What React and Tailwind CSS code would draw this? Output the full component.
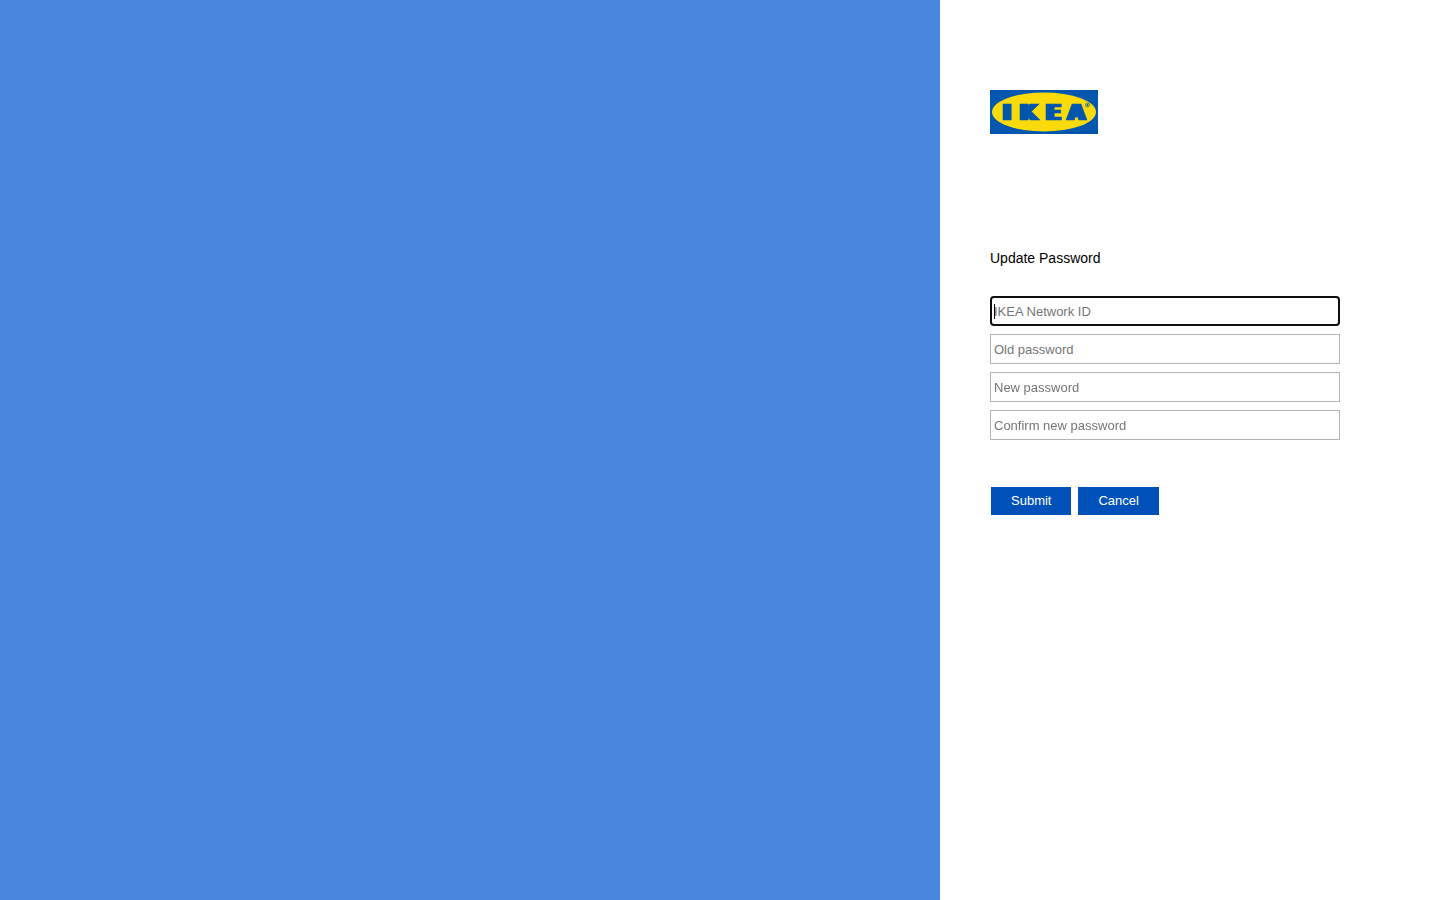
function Logo() {
  return (
    <svg width="108" height="44" viewBox="0 0 108 44" role="img" aria-label="IKEA" className="block">
      <filter id="heavy" filterUnits="userSpaceOnUse" x="0" y="0" width="108" height="44">
        <feMorphology operator="dilate" radius="2 0" />
      </filter>
      <rect width="108" height="44" fill="#0057ad" />
      <ellipse cx="54" cy="22" rx="52" ry="19.5" fill="#fbda0c" />
      <g
        fill="#0057ad"
        stroke="#0057ad"
        strokeWidth="0.6"
        fontFamily="'DejaVu Sans', Inter, sans-serif"
        fontWeight="700"
        fontSize="22"
        textAnchor="middle"
        filter="url(#heavy)"
      >
        <text x="17 38.5 63.5 86.5" y="30">IKEA</text>
      </g>
      <circle cx="97.5" cy="15" r="2" fill="none" stroke="#0057ad" strokeWidth="0.7" />
      <circle cx="97.5" cy="15" r="0.9" fill="#0057ad" />
    </svg>
  );
}

const fields = [
  { id: "network-id", label: "IKEA Network ID", type: "text" },
  { id: "old-password", label: "Old password", type: "password" },
  { id: "new-password", label: "New password", type: "password" },
  { id: "confirm-password", label: "Confirm new password", type: "password" },
];

function Field({ id, label, type, autoFocus }) {
  return (
    <div className="relative">
      <input
        id={id}
        name={id}
        type={type}
        aria-label={label}
        placeholder={label}
        autoFocus={autoFocus}
        className="peer block h-[30px] w-full border border-[#b4b4b4] bg-white px-[3px] text-[13px] text-black placeholder-shown:caret-transparent placeholder:text-[#757575] focus:rounded-[4px] focus:outline-2 focus:-outline-offset-2 focus:outline-[#101010]"
      />
      <span
        aria-hidden="true"
        className="pointer-events-none absolute top-2 left-1 hidden h-[15px] w-px bg-black peer-placeholder-shown:peer-focus:block"
      />
    </div>
  );
}

const buttonClass = "h-7 px-5 bg-[#0051ba] text-[13px] text-white";

export default function App() {
  return (
    <div className="flex min-h-screen bg-[#4687dd] font-['Liberation_Sans',Arial,sans-serif]">
      <main className="ml-auto w-full max-w-[500px] bg-white px-[50px] pt-[90px]">
        <Logo />
        <form className="mt-[114px] max-w-[350px]" onSubmit={(e) => e.preventDefault()}>
          <h1 className="text-[14px] leading-5 text-black">Update Password</h1>
          <div className="mt-7 flex flex-col gap-2">
            {fields.map((field, i) => (
              <Field key={field.id} {...field} autoFocus={i === 0} />
            ))}
          </div>
          <div className="mt-[47px] flex gap-[7px] px-px">
            <button type="submit" className={buttonClass}>Submit</button>
            <button type="button" className={buttonClass}>Cancel</button>
          </div>
        </form>
      </main>
    </div>
  );
}
